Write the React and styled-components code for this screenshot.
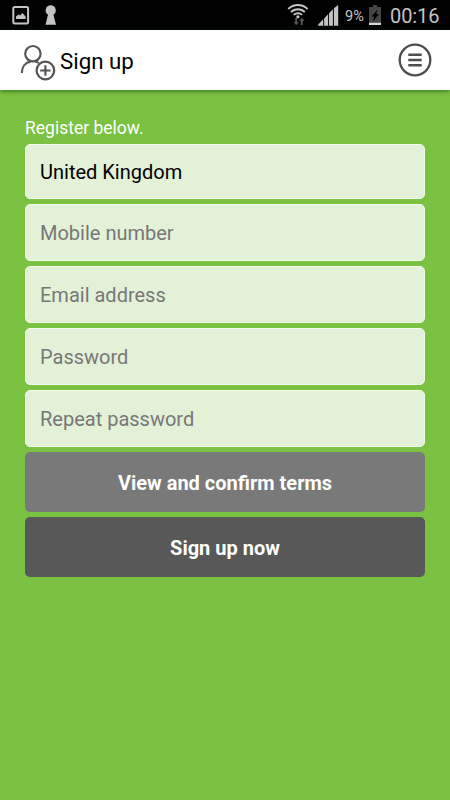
import React, { useState } from "react";
import styled, { createGlobalStyle } from "styled-components";

const GlobalStyle = createGlobalStyle`
  * {
    box-sizing: border-box;
  }

  body {
    margin: 0;
    background: #7bc142;
    font-family: Roboto, "Noto Sans", sans-serif;
  }
`;

const Screen = styled.div`
  height: 800px;
  display: flex;
  flex-direction: column;
  background: #7bc142;
  overflow: hidden;
`;

const StatusBar = styled.div`
  height: 30px;
  flex: none;
  display: flex;
  justify-content: space-between;
  background: #000;
  color: #c4c4c4;

  svg {
    display: block;
  }
`;

const StatusGroup = styled.div`
  display: flex;
  align-items: center;
`;

const Battery = styled.span`
  width: 20px;
  margin: 3px 3px 0 5px;
  font-size: 14.5px;
  white-space: nowrap;
`;

const Clock = styled.span`
  width: 60px;
  padding-top: 2px;
  font-size: 20px;
  letter-spacing: -0.1px;
  white-space: nowrap;
`;

const Header = styled.header`
  height: 60px;
  flex: none;
  display: flex;
  align-items: center;
  justify-content: space-between;
  padding: 0 18px 0 20px;
  background: #fff;
  box-shadow: 0 1px 5px rgba(0, 60, 0, 0.6);
`;

const Title = styled.h1`
  display: flex;
  align-items: center;
  gap: 4px;
  margin: 0;
  padding-top: 1px;
  font-size: 22.3px;
  font-weight: 400;
  color: #000;
`;

const MenuButton = styled.button`
  padding: 0;
  border: none;
  background: none;

  svg {
    display: block;
  }
`;

const Form = styled.form`
  display: flex;
  flex-direction: column;
  gap: 5px;
  padding: 27px 25px 0;
`;

const Intro = styled.p`
  height: 22px;
  margin: 0;
  font-size: 17.5px;
  line-height: 22px;
  color: #fff;
`;

const Country = styled.button`
  height: 55px;
  padding: 0 14px;
  border: 1px solid #f3faee;
  border-radius: 5px;
  background: #e3f1d7;
  color: #000;
  font-family: inherit;
  font-size: 20px;
  text-align: left;
`;

const Field = styled.input`
  width: 100%;
  height: 57px;
  padding: 0 14px;
  border: 1px solid #f3faee;
  border-radius: 5px;
  outline: none;
  background: #e3f1d7;
  color: #000;
  font-family: inherit;
  font-size: 20px;

  &::placeholder {
    color: #777;
    opacity: 1;
  }
`;

const Button = styled.button`
  height: 60px;
  padding: 2px 0 0;
  border: none;
  border-radius: 5px;
  background: ${(props) => (props.$dark ? "#585858" : "#797979")};
  color: #fff;
  font-family: inherit;
  font-size: 20px;
  font-weight: 700;
`;

function PictureIcon() {
  return (
    <svg width="40" height="30" viewBox="0 0 40 30">
      <rect x="13.3" y="7" width="14.8" height="16.6" rx="1.5" fill="none" stroke="#c4c4c4" strokeWidth="2" />
      <path d="M16 19v-2.4l2.4-2.2 1.8 1.2 2.2-2.5 3.2 3.5V19z" fill="#c4c4c4" />
    </svg>
  );
}

function KeyholeIcon() {
  return (
    <svg width="22" height="30" viewBox="0 0 22 30">
      <path d="M10.7 5.3a5.1 5.1 0 0 1 2.7 9.4L16 24.8H5.5L8 14.7a5.1 5.1 0 0 1 2.7-9.4z" fill="#c4c4c4" />
    </svg>
  );
}

function WifiIcon() {
  return (
    <svg width="30" height="30" viewBox="0 0 30 30">
      <g fill="none" stroke="#c4c4c4" strokeWidth="2">
        <path d="M8.3 9a13.5 13.5 0 0 1 19.2 0" />
        <path d="M11 12a9.8 9.8 0 0 1 13.8 0" />
        <path d="M13.7 14.9a6 6 0 0 1 8.4 0" />
      </g>
      <circle cx="17.9" cy="16.8" r="1.6" fill="#c4c4c4" />
      <path d="M15.2 18h1.9v4h1.6l-2.5 3.3-2.6-3.3h1.6z" fill="#555" />
      <path d="M20.8 25h1.9v-4h1.6l-2.5-3.3-2.6 3.3h1.6z" fill="#555" />
    </svg>
  );
}

function SignalIcon() {
  return (
    <svg width="30" height="30" viewBox="0 0 30 30">
      <path
        d="M8.2 25.7v-1.2l5-5.2v6.4zM14.1 25.7v-7.3l4-4.2v11.5zM19 25.7V13.3l3.9-4v16.4zM23.9 25.7V8.2L28.2 5v20.7z"
        fill="#c4c4c4"
      />
    </svg>
  );
}

function BatteryIcon() {
  return (
    <svg width="22" height="30" viewBox="0 0 22 30">
      <path d="M5 5h4v2h4v18H1V7h4z" fill="#454545" />
      <path d="M9.8 9.5 3.4 16.4l3 .2-1.6 5 6.2-7.4-2.9-.2z" fill="#000" />
      <path d="M1 22.8h12V25H1z" fill="#d8d8d8" />
    </svg>
  );
}

function AddUserIcon() {
  return (
    <svg width="36" height="40" viewBox="0 -2 36 40" fill="none" stroke="#555" strokeWidth="2.2">
      <circle cx="12.9" cy="10.7" r="7.7" />
      <path d="M1.8 30c0-6 3.4-10.5 9-11.3" />
      <path d="M15.2 18.3c1.5.3 2.6.9 3.6 1.7" />
      <circle cx="25.4" cy="27.5" r="8.8" />
      <path d="M25.4 22.3v10.4M20.2 27.5h10.4" />
    </svg>
  );
}

function MenuIcon() {
  return (
    <svg width="34" height="34" viewBox="0 0 34 34" fill="none" stroke="#4d4d4d">
      <circle cx="17" cy="17" r="15.3" strokeWidth="2.3" />
      <path d="M10.3 11.7h13.4M10.3 17h13.4M10.3 22.3h13.4" strokeWidth="2.4" />
    </svg>
  );
}

const fields = [
  { name: "mobile", type: "tel", label: "Mobile number" },
  { name: "email", type: "email", label: "Email address" },
  { name: "password", type: "password", label: "Password" },
  { name: "repeat", type: "password", label: "Repeat password" },
];

function App() {
  const [values, setValues] = useState({});

  function handleChange(event) {
    setValues({ ...values, [event.target.name]: event.target.value });
  }

  return (
    <Screen>
      <GlobalStyle />
      <StatusBar>
        <StatusGroup>
          <PictureIcon />
          <KeyholeIcon />
        </StatusGroup>
        <StatusGroup>
          <WifiIcon />
          <SignalIcon />
          <Battery>9%</Battery>
          <BatteryIcon />
          <Clock>00:16</Clock>
        </StatusGroup>
      </StatusBar>
      <Header>
        <Title>
          <AddUserIcon />
          Sign up
        </Title>
        <MenuButton type="button" aria-label="Menu">
          <MenuIcon />
        </MenuButton>
      </Header>
      <Form onSubmit={(event) => event.preventDefault()}>
        <Intro>Register below.</Intro>
        <Country type="button">United Kingdom</Country>
        {fields.map((field) => (
          <Field
            key={field.name}
            name={field.name}
            type={field.type}
            placeholder={field.label}
            value={values[field.name] || ""}
            onChange={handleChange}
          />
        ))}
        <Button type="button">View and confirm terms</Button>
        <Button type="submit" $dark>Sign up now</Button>
      </Form>
    </Screen>
  );
}

export default App;
